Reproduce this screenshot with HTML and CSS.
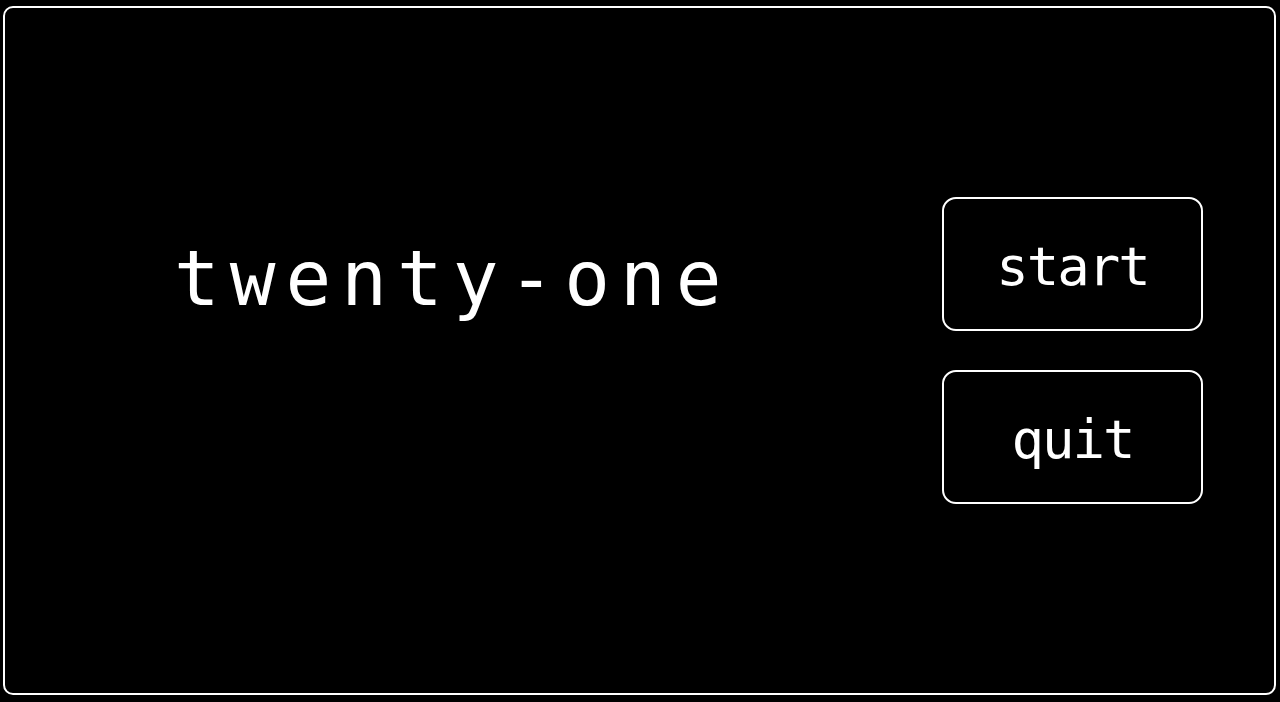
FILE: index.html
```html
<!DOCTYPE html>
<html lang="en">
<head>
<meta charset="utf-8">
<title>twenty-one</title>
<link rel="stylesheet" href="styles.css">
</head>
<body>
  <main class="screen">
    <h1 class="title">twenty-one</h1>
    <nav class="menu">
      <button class="menu-btn" type="button">start</button>
      <button class="menu-btn" type="button">quit</button>
    </nav>
  </main>
</body>
</html>
```

FILE: styles.css
```css
html, body {
  margin: 0;
  padding: 0;
  background: #000;
}

body {
  width: 1280px;
  height: 702px;
  overflow: hidden;
  color: #fff;
  font-family: "DejaVu Sans Mono", "Liberation Mono", monospace;
}

/* rounded outline around the whole game screen */
.screen {
  box-sizing: border-box;
  width: 1273px;
  height: 689px;
  margin: 6px 0 0 3px;
  border: 2px solid #fff;
  border-radius: 10px;
  display: flex;
  align-items: center;
}

.title {
  align-self: flex-start;
  margin: 233px 0 0 169px;
  font-size: 76px;
  line-height: 76px;
  font-weight: normal;
  letter-spacing: 10px;
}

.menu {
  margin-left: auto;
  margin-right: 71px;
  display: flex;
  flex-direction: column;
  gap: 39px;
}

.menu-btn {
  box-sizing: border-box;
  width: 261px;
  height: 134px;
  padding: 4px 0 0;
  border: 2px solid #fff;
  border-radius: 14px;
  background: #000;
  color: #fff;
  font-family: inherit;
  font-size: 54px;
  letter-spacing: -2px;
  display: flex;
  align-items: center;
  justify-content: center;
}
```
